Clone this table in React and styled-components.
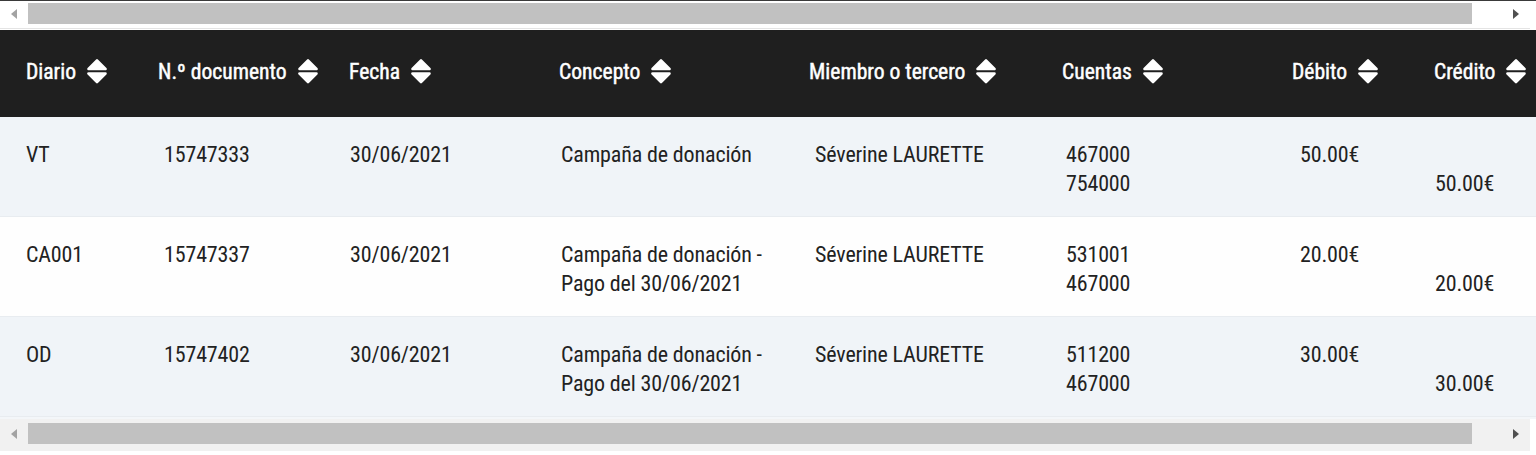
import React from 'react';
import styled, { createGlobalStyle } from 'styled-components';

const GlobalStyle = createGlobalStyle`
  html, body {
    margin: 0;
    padding: 0;
    background: #ffffff;
  }
  body {
    font-family: "Roboto Condensed", "Liberation Sans Narrow", "DejaVu Sans Condensed", Roboto, sans-serif;
    color: #222222;
  }
`;

const columns = [
  { label: 'Diario', width: 132, nudge: 0 },
  { label: 'N.º documento', width: 191, nudge: 6 },
  { label: 'Fecha', width: 210, nudge: 1 },
  { label: 'Concepto', width: 250, nudge: 2 },
  { label: 'Miembro o tercero', width: 253, nudge: 6 },
  { label: 'Cuentas', width: 230, nudge: 4 },
  { label: 'Débito', width: 142, nudge: 8 },
  { label: 'Crédito', width: 128, nudge: 1 },
];

const rows = [
  {
    diario: 'VT',
    doc: '15747333',
    fecha: '30/06/2021',
    concepto: ['Campaña de donación'],
    miembro: 'Séverine LAURETTE',
    cuentas: ['467000', '754000'],
    debito: '50.00€',
    credito: '50.00€',
  },
  {
    diario: 'CA001',
    doc: '15747337',
    fecha: '30/06/2021',
    concepto: ['Campaña de donación -', 'Pago del 30/06/2021'],
    miembro: 'Séverine LAURETTE',
    cuentas: ['531001', '467000'],
    debito: '20.00€',
    credito: '20.00€',
  },
  {
    diario: 'OD',
    doc: '15747402',
    fecha: '30/06/2021',
    concepto: ['Campaña de donación -', 'Pago del 30/06/2021'],
    miembro: 'Séverine LAURETTE',
    cuentas: ['511200', '467000'],
    debito: '30.00€',
    credito: '30.00€',
  },
];

const gridTemplate = columns.map(c => `${c.width}px`).join(' ');

const SortIcon = () => (
  <svg width="20" height="25" viewBox="0 0 20 25">
    <polygon points="10,1.5 18.5,10 1.5,10" fill="#fff" stroke="#fff" strokeWidth="2.6" strokeLinejoin="round" />
    <polygon points="1.5,14.5 18.5,14.5 10,23" fill="#fff" stroke="#fff" strokeWidth="2.6" strokeLinejoin="round" />
  </svg>
);

const Arrow = ({ dir, active }) => (
  <ArrowBox>
    <Triangle $dir={dir} $active={active} />
  </ArrowBox>
);

const ScrollBar = ({ variant }) => (
  <Track $variant={variant}>
    <Arrow dir="left" />
    <ThumbArea>
      <Thumb />
    </ThumbArea>
    <Arrow dir="right" active />
  </Track>
);

const App = () => {
  return (
    <>
      <GlobalStyle />
      <Page>
        <ScrollBar variant="top" />
        <Table>
          <HeaderRow>
            {columns.map(col => (
              <HeadCell key={col.label}>
                <span>{col.label}</span>
                <SortIcon />
              </HeadCell>
            ))}
          </HeaderRow>
          {rows.map((row, i) => (
            <BodyRow key={row.doc} $striped={i % 2 === 0}>
              <Cell $nudge={columns[0].nudge}>{row.diario}</Cell>
              <Cell $nudge={columns[1].nudge}>{row.doc}</Cell>
              <Cell $nudge={columns[2].nudge}>{row.fecha}</Cell>
              <Cell $nudge={columns[3].nudge}>
                {row.concepto.map(line => <Line key={line}>{line}</Line>)}
              </Cell>
              <Cell $nudge={columns[4].nudge}>{row.miembro}</Cell>
              <Cell $nudge={columns[5].nudge}>
                {row.cuentas.map(line => <Line key={line}>{line}</Line>)}
              </Cell>
              <Cell $nudge={columns[6].nudge}>{row.debito}</Cell>
              <Cell $nudge={columns[7].nudge} $lineOffset={1}>{row.credito}</Cell>
            </BodyRow>
          ))}
        </Table>
        <Gap />
        <ScrollBar variant="bottom" />
      </Page>
    </>
  );
};

export default App;

const Page = styled.div`
  width: 1536px;
  height: 455px;
  overflow: hidden;
  display: flex;
  flex-direction: column;
  border-top: 1px solid #3a3a3a;
  box-sizing: border-box;
`

const Track = styled.div`
  display: flex;
  align-items: stretch;
  flex-shrink: 0;
  width: 1530px;
  height: ${props => props.$variant === 'top' ? '28px' : '32px'};
  padding: ${props => props.$variant === 'top' ? '2px 0 0' : '4px 0 4px'};
  box-sizing: border-box;
  background: ${props => props.$variant === 'top' ? '#ffffff' : '#f1f1f1'};
  border-bottom: ${props => props.$variant === 'top' ? '1px solid #e4e4e4' : 'none'};
  margin-bottom: ${props => props.$variant === 'top' ? '1px' : '0'};
`

const ArrowBox = styled.div`
  width: 28px;
  height: 21px;
  display: flex;
  align-items: center;
  justify-content: center;
`

const Triangle = styled.div`
  width: 0;
  height: 0;
  border-top: 5px solid transparent;
  border-bottom: 5px solid transparent;
  ${props => props.$dir === 'left'
    ? `border-right: 6px solid ${props.$active ? '#505050' : '#a3a3a3'};`
    : `border-left: 6px solid ${props.$active ? '#505050' : '#a3a3a3'};`}
`

const ThumbArea = styled.div`
  flex: 1;
  display: flex;
`

const Thumb = styled.div`
  width: 1444px;
  height: 21px;
  background: #c1c1c1;
`

const Table = styled.div`
  display: flex;
  flex-direction: column;
  flex-shrink: 0;
  width: 1536px;
`

const HeaderRow = styled.div`
  display: grid;
  grid-template-columns: ${gridTemplate};
  height: 87px;
  box-sizing: border-box;
  padding-bottom: 4px;
  background: #1f1f1f;
  color: #ffffff;
`

const HeadCell = styled.div`
  display: flex;
  align-items: center;
  gap: 11px;
  padding-left: 26px;
  font-size: 21.6px;
  font-weight: 400;
  -webkit-text-stroke: 0.45px #ffffff;
  white-space: nowrap;

  svg {
    flex-shrink: 0;
  }
`

const BodyRow = styled.div`
  display: grid;
  grid-template-columns: ${gridTemplate};
  height: 100px;
  box-sizing: border-box;
  padding-top: 23px;
  background: ${props => props.$striped ? '#f0f4f8' : '#fefefe'};
  border-bottom: 1px solid #e8ecf0;
  font-size: 22px;
  letter-spacing: -0.15px;
  line-height: 29px;
`

const Cell = styled.div`
  padding-left: ${props => 26 + props.$nudge}px;
  padding-top: ${props => (props.$lineOffset || 0) * 29}px;
  white-space: nowrap;
`

const Line = styled.div`
`

const Gap = styled.div`
  height: 2px;
  flex-shrink: 0;
  background: #f3f6f9;
`
